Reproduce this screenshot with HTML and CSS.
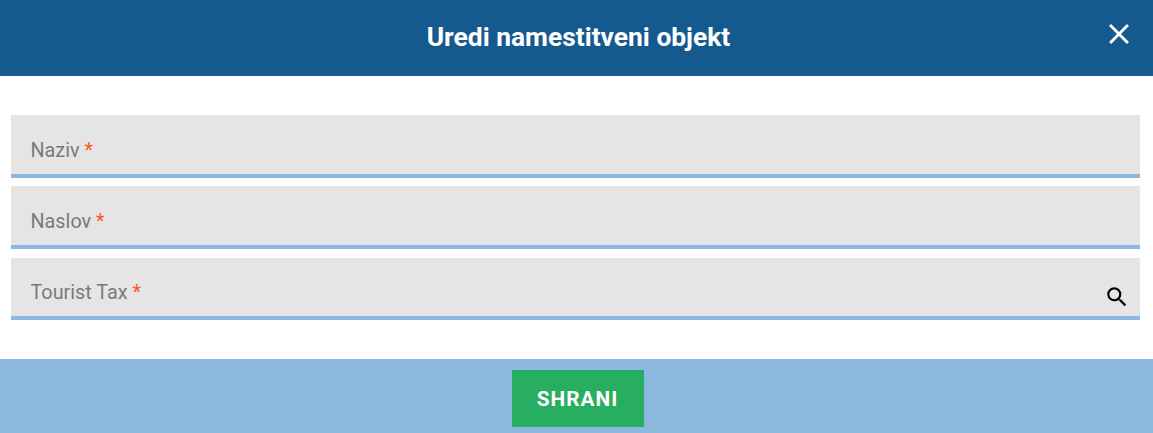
FILE: index.html
```html
<!DOCTYPE html>
<html lang="sl">
<head>
    <meta charset="UTF-8">
    <title>Uredi namestitveni objekt</title>
    <link rel="stylesheet" href="styles.css">
</head>
<body>
<div class="dialog">
    <header class="dialog-header">
        <h1>Uredi namestitveni objekt</h1>
        <button class="close-btn" aria-label="Zapri">
            <svg viewBox="0 0 24 24" width="34" height="34"><path d="M19 6.41 17.59 5 12 10.59 6.41 5 5 6.41 10.59 12 5 17.59 6.41 19 12 13.41 17.59 19 19 17.59 13.41 12z"/></svg>
        </button>
    </header>
    <form class="dialog-body">
        <div class="field"><label>Naziv <span class="req">*</span></label></div>
        <div class="field"><label>Naslov <span class="req">*</span></label></div>
        <div class="field field-last">
            <label>Tourist Tax <span class="req">*</span></label>
            <svg class="search-icon" viewBox="0 0 24 24" width="26" height="26"><path d="M15.5 14h-.79l-.28-.27A6.471 6.471 0 0 0 16 9.5 6.5 6.5 0 1 0 9.5 16c1.61 0 3.09-.59 4.23-1.57l.27.28v.79l5 4.99L20.49 19l-4.99-5zm-6 0C7.01 14 5 11.99 5 9.5S7.01 5 9.5 5 14 7.01 14 9.5 11.99 14 9.5 14z"/></svg>
        </div>
    </form>
    <footer class="dialog-footer">
        <button class="save-btn">SHRANI</button>
    </footer>
</div>
</body>
</html>
```
FILE: styles.css
```css
body {
    margin: 0;
    background-color: #fff;
    font-family: Roboto, sans-serif;
}

.dialog {
    display: flex;
    flex-direction: column;
    height: 433px;
    overflow: hidden;
}

.dialog-header {
    display: flex;
    align-items: center;
    justify-content: center;
    height: 76px;
    flex-shrink: 0;
    padding: 0 0 2px 4px;
    box-sizing: border-box;
    background-color: #155a8f;
    color: #fff;
    position: relative;
}

.dialog-header h1 {
    margin: 0;
    font-size: 26.4px;
    font-weight: 700;
}

.close-btn {
    position: absolute;
    top: 17px;
    right: 17px;
    padding: 0;
    width: 34px;
    height: 34px;
    border: 0;
    background: none;
    cursor: pointer;
}

.close-btn svg {
    display: block;
    fill: #fff;
}

.dialog-body {
    flex: 1;
    display: flex;
    flex-direction: column;
    gap: 8px;
    padding: 39px 13px 0 11px;
}

.field {
    display: flex;
    align-items: flex-end;
    justify-content: space-between;
    height: 63px;
    padding: 0 10px 11px 19.5px;
    box-sizing: border-box;
    background-color: #e5e5e5;
    border-bottom: 4px solid #8db8df;
}

.field-last {
    height: 62px;
    margin-top: 1px;
}

.field label {
    font-size: 19.8px;
    line-height: 24px;
    color: #7a7a7a;
}

.req {
    color: #ff5722;
}

.search-icon {
    margin-bottom: -5px;
}

.dialog-footer {
    display: flex;
    justify-content: center;
    height: 74px;
    padding: 11px 0 0 2px;
    box-sizing: border-box;
    background-color: #8db8df;
}

.save-btn {
    width: 132px;
    height: 57px;
    border: 0;
    background-color: #27ae60;
    color: #fff;
    font-family: Roboto, sans-serif;
    font-size: 20.8px;
    font-weight: 700;
    letter-spacing: 1px;
    cursor: pointer;
}
```
